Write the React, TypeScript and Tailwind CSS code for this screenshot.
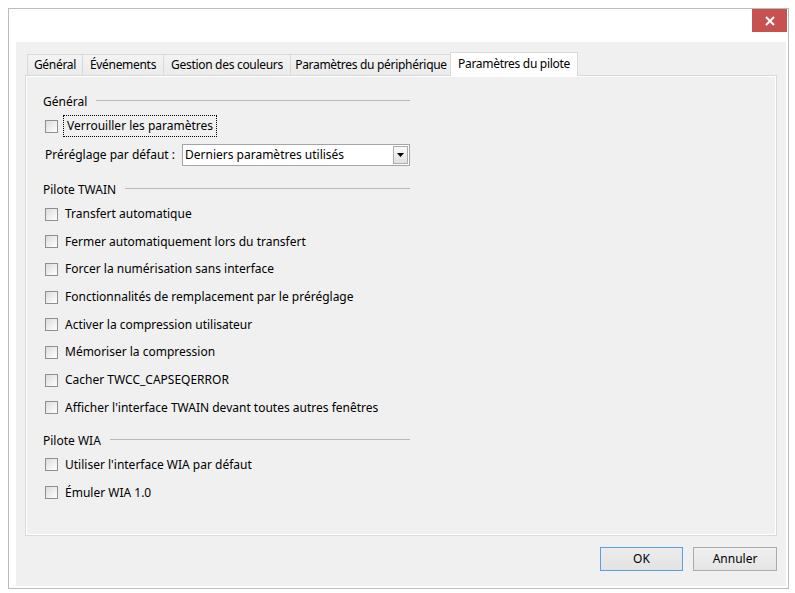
import React from "react";

const tabs = [
  { label: "Général", w: "w-[56px]" },
  { label: "Événements", w: "w-[82px]" },
  { label: "Gestion des couleurs", w: "w-[128px]" },
  { label: "Paramètres du périphérique", w: "w-[162px]" },
];

const twainOptions = [
  "Transfert automatique",
  "Fermer automatiquement lors du transfert",
  "Forcer la numérisation sans interface",
  "Fonctionnalités de remplacement par le préréglage",
  "Activer la compression utilisateur",
  "Mémoriser la compression",
  "Cacher TWCC_CAPSEQERROR",
  "Afficher l'interface TWAIN devant toutes autres fenêtres",
];

function CheckBox() {
  return (
    <span className="block w-[13px] h-[13px] shrink-0 border border-[#8e8f8f] bg-linear-to-br from-[#dcdcdc] to-white" />
  );
}

function CheckRow({ label }: { label: string }) {
  return (
    <div className="flex items-center h-[20px] ml-[2px]">
      <CheckBox />
      <span className="ml-[7px] whitespace-nowrap">{label}</span>
    </div>
  );
}

// group box caption with its top rule
function GroupHeader({ title }: { title: string }) {
  return (
    <div className="flex items-center h-[20px] w-[367px]">
      <span className="whitespace-nowrap">{title}</span>
      <span className="flex-1 h-px bg-[#b9b9b9] ml-[9px] mb-[3px]" />
    </div>
  );
}

export default function App() {
  return (
    <div className="w-[795px] h-[593px] bg-white pt-[8px] pl-[8px] text-[12px] text-black font-['Segoe_UI','Noto_Sans',sans-serif]">
      <div className="w-[781px] h-[581px] border border-[#bcbcbc] bg-white flex flex-col">
        {/* title bar */}
        <div className="h-[33px] flex justify-end pr-[1px]">
          <button className="w-[35px] h-[23px] bg-[#c75050] flex items-center justify-center">
            <svg width="10" height="10" viewBox="0 0 10 10">
              <path d="M1 1L9 9M9 1L1 9" stroke="#fff" strokeWidth="2" />
            </svg>
          </button>
        </div>

        {/* client */}
        <div className="pl-[7px] pr-[2px]">
          <div className="w-[770px] h-[544px] bg-[#f0f0f0] px-[9px] pt-[10px]">
            {/* tab strip */}
            <div className="relative z-10 flex items-end h-[24px] pl-[2px] tracking-[-0.3px]">
              {tabs.map((t, i) => (
                <div
                  key={t.label}
                  className={`${t.w} h-[21px] mb-[1px] ${i > 0 ? "-ml-px" : ""} border border-b-0 border-[#d9d9d9] bg-linear-to-b from-[#f3f3f3] to-[#ebebeb] flex items-center justify-center whitespace-nowrap`}
                >
                  {t.label}
                </div>
              ))}
              <div className="w-[128px] h-[24px] -ml-[2px] border border-b-0 border-[#d9d9d9] bg-white flex items-center justify-center whitespace-nowrap pb-[2px]">
                Paramètres du pilote
              </div>
            </div>

            {/* tab page */}
            <div className="-mt-px w-[752px] h-[461px] border border-[#d9d9d9] shadow-[inset_0_0_0_1px_#ffffff] pl-[17px] pt-[16px] flex flex-col">
              <GroupHeader title="Général" />
              <div className="flex items-center h-[22px] ml-[2px] mt-[3px]">
                <CheckBox />
                <span className="ml-[5px] px-[3px] h-[22px] flex items-center border border-dotted border-black whitespace-nowrap">
                  Verrouiller les paramètres
                </span>
              </div>
              <div className="flex items-center h-[22px] ml-[2px] mt-[7px]">
                <span className="w-[137px] whitespace-nowrap">Préréglage par défaut :</span>
                <div className="w-[228px] h-[22px] border border-[#a4a4a4] bg-white flex items-center pl-[2px] pr-[1px]">
                  <span className="flex-1 whitespace-nowrap">Derniers paramètres utilisés</span>
                  <span className="w-[15px] h-[18px] border border-[#adadad] bg-linear-to-b from-[#fafafa] to-[#e2e2e2] flex items-center justify-center">
                    <svg width="7" height="4" viewBox="0 0 7 4">
                      <path d="M0 0H7L3.5 4Z" fill="#000" />
                    </svg>
                  </span>
                </div>
              </div>

              <div className="mt-[14px]">
                <GroupHeader title="Pilote TWAIN" />
              </div>
              <div className="mt-[4px] flex flex-col gap-[7.7px]">
                {twainOptions.map((o) => (
                  <CheckRow key={o} label={o} />
                ))}
              </div>

              <div className="mt-[13px]">
                <GroupHeader title="Pilote WIA" />
              </div>
              <div className="mt-[4px] flex flex-col gap-[8px]">
                <CheckRow label="Utiliser l'interface WIA par défaut" />
                <CheckRow label="Émuler WIA 1.0" />
              </div>
            </div>

            {/* buttons */}
            <div className="flex justify-end gap-[10px] mt-[11px]">
              <button className="w-[83px] h-[24px] border border-[#5a9fe0] bg-linear-to-b from-[#ececec] to-[#e3e3e3]">
                OK
              </button>
              <button className="w-[84px] h-[24px] border border-[#acacac] bg-linear-to-b from-[#f0f0f0] to-[#e5e5e5]">
                Annuler
              </button>
            </div>
          </div>
        </div>
      </div>
    </div>
  );
}
